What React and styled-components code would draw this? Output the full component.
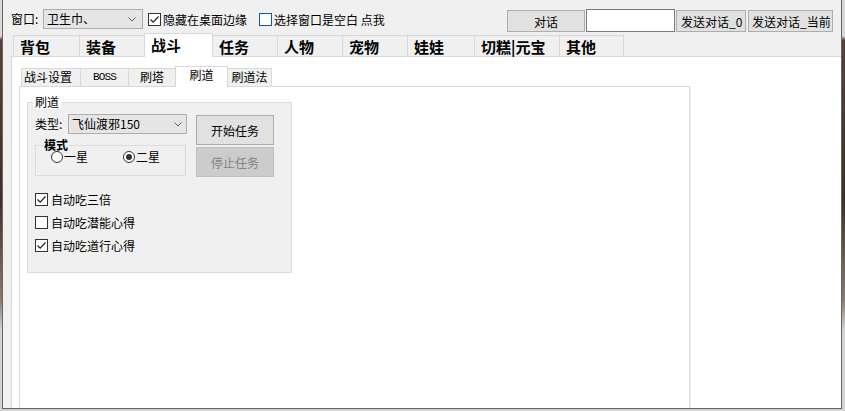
import React from 'react';
import styled, { createGlobalStyle } from 'styled-components';

const GlobalStyle = createGlobalStyle`
  html, body {
    margin: 0;
    padding: 0;
  }
  body {
    background: #d2d2d2;
    font-family: "Noto Sans CJK SC", "Microsoft YaHei", sans-serif;
    font-size: 12px;
    color: #000;
  }
`;

const Desktop = styled.div`
  width: 845px;
  height: 411px;
  box-sizing: border-box;
  padding: 0 3px 2px 2px;
  display: flex;
  overflow: hidden;
  background: linear-gradient(to bottom, #d8d8d8 0, #d8d8d8 36px, #5b4136 40px, #3e2f28 200px, #8a7a70 300px, #d2d2d2 330px);
`;

const Window = styled.div`
  flex: 1;
  display: flex;
  flex-direction: column;
  min-width: 0;
  background: #f0f0f0;
  border: 1px solid #666;
  border-top: none;
  overflow: hidden;
`;

/* ---------- top toolbar ---------- */

const Toolbar = styled.div`
  display: flex;
  align-items: flex-start;
  height: 33px;
  box-sizing: border-box;
  padding: 9px 8px 0 8px;
`;

const LeftGroup = styled.div`
  display: flex;
  align-items: center;
  height: 20px;
`;

const Label = styled.span`
  display: inline-block;
  width: ${({ $w }) => $w}px;
  line-height: 20px;
  white-space: nowrap;
`;

const Combo = styled.div`
  display: flex;
  align-items: center;
  justify-content: space-between;
  width: ${({ $w }) => $w}px;
  height: 20px;
  box-sizing: border-box;
  padding: 0 ${({ $pr }) => $pr}px 0 3px;
  background: #e5e5e5;
  border: 1px solid #adadad;
  line-height: 18px;
  white-space: nowrap;

  & svg {
    flex: none;
  }
`;

const CheckRow = styled.label`
  display: flex;
  align-items: center;
  margin-left: ${({ $ml }) => $ml || 0}px;
  height: ${({ $h }) => $h || 20}px;
  white-space: nowrap;
`;

const Box = styled.span`
  display: flex;
  align-items: center;
  justify-content: center;
  width: 13px;
  height: 13px;
  box-sizing: border-box;
  background: #fff;
  border: 1px solid ${({ $focus }) => ($focus ? '#0b5aa8' : '#333')};
  margin-right: ${({ $gap }) => $gap}px;
`;

const RightGroup = styled.div`
  display: flex;
  align-items: flex-start;
  margin-left: auto;
`;

const Button = styled.button`
  width: ${({ $w }) => $w}px;
  height: ${({ $h }) => $h || 22}px;
  margin: ${({ $m }) => $m || '1px 0 0 0'};
  padding: 0 0 0 ${({ $pl }) => ($pl == null ? 0 : $pl)}px;
  text-align: ${({ $pl }) => ($pl == null ? 'center' : 'left')};
  box-sizing: border-box;
  font-family: inherit;
  font-size: 12px;
  color: ${({ disabled }) => (disabled ? '#838383' : '#000')};
  background: ${({ disabled }) => (disabled ? '#cccccc' : '#e1e1e1')};
  border: 1px solid ${({ disabled }) => (disabled ? '#bfbfbf' : '#adadad')};
  white-space: nowrap;
`;

const TextInput = styled.div`
  width: 89px;
  height: 23px;
  box-sizing: border-box;
  margin-left: 1px;
  margin-right: 1px;
  background: #fff;
  border: 1px solid #7a7a7a;
`;

/* ---------- tabs ---------- */

const MainTabs = styled.div`
  flex: 1;
  display: flex;
  flex-direction: column;
  margin-left: 8px;
  min-height: 0;
`;

const TabStrip = styled.div`
  display: flex;
  align-items: flex-end;
  height: 23px;
  padding-left: 2px;
`;

const Tab = styled.div`
  position: relative;
  flex: none;
  width: ${({ $w }) => $w + 1}px;
  height: ${({ $active }) => ($active ? 24 : 21)}px;
  margin-right: -1px;
  margin-bottom: ${({ $active }) => ($active ? -1 : 0)}px;
  z-index: ${({ $active }) => ($active ? 2 : 1)};
  box-sizing: border-box;
  padding: 1px 0 0 6px;
  background: ${({ $active }) => ($active ? '#fff' : '#f0f0f0')};
  border: 1px solid #d9d9d9;
  border-bottom: none;
  font-size: 15px;
  font-weight: bold;
  line-height: 19px;
  white-space: nowrap;
`;

const Page = styled.div`
  flex: 1;
  display: flex;
  flex-direction: column;
  min-height: 0;
  background: #fff;
  border-top: 1px solid #d9d9d9;
  border-left: 1px solid #d9d9d9;
  padding: 9px 0 0 7px;
`;

const SubStrip = styled.div`
  display: flex;
  align-items: flex-end;
  height: 20px;
  padding-left: 2px;
`;

const SubTab = styled.div`
  position: relative;
  flex: none;
  width: ${({ $w }) => $w + 1}px;
  height: ${({ $active }) => ($active ? 21 : 18)}px;
  margin-right: -1px;
  margin-bottom: ${({ $active }) => ($active ? -1 : 0)}px;
  z-index: ${({ $active }) => ($active ? 2 : 1)};
  box-sizing: border-box;
  padding-right: ${({ $pr }) => $pr || 0}px;
  background: ${({ $active }) => ($active ? '#fff' : '#f0f0f0')};
  border: 1px solid #d9d9d9;
  border-bottom: none;
  text-align: center;
  line-height: ${({ $active }) => ($active ? 15 : 16)}px;
  font-family: ${({ $mono }) => ($mono ? '"Liberation Mono", monospace' : 'inherit')};
  font-size: ${({ $mono }) => ($mono ? 11 : 12)}px;
  letter-spacing: ${({ $mono }) => ($mono ? -0.8 : 0)}px;
  white-space: nowrap;
`;

const SubPage = styled.div`
  flex: 1;
  width: 671px;
  box-sizing: border-box;
  background: #fff;
  border: 1px solid #d9d9d9;
  border-bottom: none;
  box-shadow: 1px 0 0 #ececec;
  padding: 8px 0 0 7px;
`;

/* ---------- group boxes ---------- */

const Group = styled.fieldset`
  width: 265px;
  box-sizing: border-box;
  margin: 0;
  padding: 0 7px 15px 7px;
  background: #f0f0f0;
  border: 1px solid #dcdcdc;
`;

const GroupTitle = styled.legend`
  margin-left: -2px;
  padding: 0 2px;
  background: #fff;
  line-height: 14px;
`;

const TopArea = styled.div`
  display: grid;
  grid-template-columns: 152px 78px;
  column-gap: 9px;
  margin-top: 5px;
`;

const Column = styled.div`
  display: flex;
  flex-direction: column;
`;

const FieldRow = styled.div`
  display: flex;
  align-items: center;
  height: 20px;
`;

const ModeGroup = styled.fieldset`
  width: 151px;
  box-sizing: border-box;
  margin: 5px 0 0 0;
  padding: 0 0 12px 15px;
  border: 1px solid #dcdcdc;
`;

const ModeTitle = styled.legend`
  margin-left: -8px;
  padding: 0 1px;
  font-weight: bold;
  line-height: 12px;
`;

const RadioRow = styled.div`
  display: flex;
  align-items: center;
  height: 12px;
`;

const RadioItem = styled.label`
  display: flex;
  align-items: center;
  gap: 1px;
  width: ${({ $w }) => $w}px;
  line-height: 12px;
  white-space: nowrap;
`;

const Radio = styled.span`
  position: relative;
  width: 12px;
  height: 12px;
  box-sizing: border-box;
  border-radius: 50%;
  border: 1px solid #333;
  background: #fff;

  &::after {
    content: '';
    display: ${({ $checked }) => ($checked ? 'block' : 'none')};
    position: absolute;
    left: 2px;
    top: 2px;
    width: 6px;
    height: 6px;
    border-radius: 50%;
    background: #333;
  }
`;

const CheckList = styled.div`
  display: flex;
  flex-direction: column;
  margin-top: 11px;
`;

const Chevron = () => (
  <svg width="8" height="5" viewBox="0 0 8 5">
    <path d="M0.5 0.5 L4 4 L7.5 0.5" fill="none" stroke="#5f5f5f" strokeWidth="1" />
  </svg>
);

const Tick = () => (
  <svg width="11" height="11" viewBox="0 0 11 11">
    <path d="M1.5 5.5 L4.2 8.2 L9.5 2.5" fill="none" stroke="#222" strokeWidth="1.2" />
  </svg>
);

const Check = ({ checked, focus, gap = 2, ml, h, children }) => (
  <CheckRow $ml={ml} $h={h}>
    <Box $focus={focus} $gap={gap}>{checked && <Tick />}</Box>
    {children}
  </CheckRow>
);

const mainTabs = [
  { name: '背包', w: 66 },
  { name: '装备', w: 65 },
  { name: '战斗', w: 68, active: true },
  { name: '任务', w: 65 },
  { name: '人物', w: 65 },
  { name: '宠物', w: 65 },
  { name: '娃娃', w: 67 },
  { name: '切糕|元宝', w: 85 },
  { name: '其他', w: 64 },
];

const subTabs = [
  { name: '战斗设置', w: 59, pr: 6 },
  { name: 'BOSS', w: 48, mono: true },
  { name: '刷塔', w: 47 },
  { name: '刷道', w: 52, active: true },
  { name: '刷道法', w: 44 },
];

const options = [
  { label: '自动吃三倍', checked: true },
  { label: '自动吃潜能心得', checked: false },
  { label: '自动吃道行心得', checked: true },
];

export default function App() {
  return (
    <>
      <GlobalStyle />
      <Desktop>
        <Window>
          <Toolbar>
            <LeftGroup>
              <Label $w={32}>窗口:</Label>
              <Combo $w={100} $pr={6}>
                <span>卫生巾、</span>
                <Chevron />
              </Combo>
              <Check checked ml={5}>隐藏在桌面边缘</Check>
              <Check focus ml={12} gap={2}>选择窗口是空白 点我</Check>
            </LeftGroup>
            <RightGroup>
              <Button $w={78}>对话</Button>
              <TextInput />
              <Button $w={70} $pl={4}>发送对话_0</Button>
              <Button $w={85} $pl={3} $m="1px 0 0 2px">发送对话_当前</Button>
            </RightGroup>
          </Toolbar>

          <MainTabs>
            <TabStrip>
              {mainTabs.map((t) => (
                <Tab key={t.name} $w={t.w} $active={t.active}>{t.name}</Tab>
              ))}
            </TabStrip>
            <Page>
              <SubStrip>
                {subTabs.map((t) => (
                  <SubTab key={t.name} $w={t.w} $pr={t.pr} $active={t.active} $mono={t.mono}>{t.name}</SubTab>
                ))}
              </SubStrip>
              <SubPage>
                <Group>
                  <GroupTitle>刷道</GroupTitle>
                  <TopArea>
                    <Column>
                      <FieldRow>
                        <Label $w={33}>类型:</Label>
                        <Combo $w={119} $pr={4}>
                          <span>飞仙渡邪150</span>
                          <Chevron />
                        </Combo>
                      </FieldRow>
                      <ModeGroup>
                        <ModeTitle>模式</ModeTitle>
                        <RadioRow>
                          <RadioItem $w={72}><Radio />一星</RadioItem>
                          <RadioItem $w={50}><Radio $checked />二星</RadioItem>
                        </RadioRow>
                      </ModeGroup>
                    </Column>
                    <Column>
                      <Button $w={78} $h={30}>开始任务</Button>
                      <Button $w={78} $h={30} $m="2px 0 0 0" disabled>停止任务</Button>
                    </Column>
                  </TopArea>
                  <CheckList>
                    {options.map((o) => (
                      <Check key={o.label} checked={o.checked} gap={3} h={23}>{o.label}</Check>
                    ))}
                  </CheckList>
                </Group>
              </SubPage>
            </Page>
          </MainTabs>
        </Window>
      </Desktop>
    </>
  );
}
